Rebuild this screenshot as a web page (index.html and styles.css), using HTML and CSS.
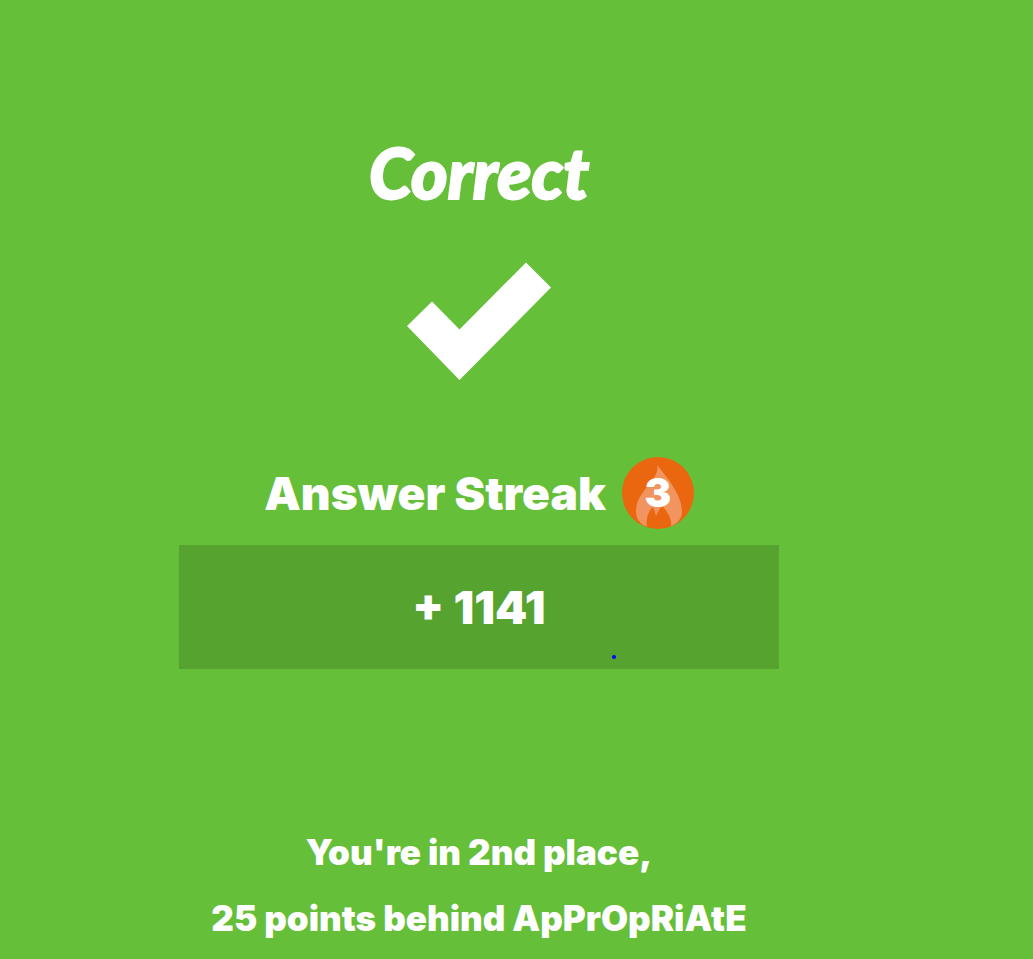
FILE: index.html
```html
<!DOCTYPE html>
<html lang="en">
<head>
<meta charset="utf-8">
<meta name="viewport" content="width=device-width, initial-scale=1">
<title>Correct</title>
<link rel="stylesheet" href="styles.css">
</head>
<body>
<main class="result">
  <h1 class="title">Correct</h1>
  <svg class="check" viewBox="0 0 144 118" aria-hidden="true">
    <path d="M0 64 25 39.500 52.500 67.500 119 0.500 144 25.500 52.500 118Z"/>
  </svg>
  <div class="streak">
    <span class="streak-label">Answer Streak</span>
    <span class="badge">
      <svg class="flame" viewBox="0 0 72 72" aria-hidden="true">
        <circle class="disc" cx="36" cy="36" r="36"/>
        <path class="fire" d="M35.500 8C44 20 60 37 60 55C60 61 56 66 49 69.500C50 63 47 57 42 51C39 47 38 52 34 59C32 52 31 48 29 52C25 58 24 63 25 69.500C18 67 14 62 14 54C14 42 22 34 29 25C34 19 36 14 35.500 8Z"/>
      </svg>
      <span class="count">3</span>
    </span>
  </div>
  <div class="points">
    <span>+ 1141</span>
    <i class="dot"></i>
  </div>
  <p class="rank">You're in 2nd place,</p>
  <p class="rank">25 points behind ApPrOpRiAtE</p>
</main>
</body>
</html>
```
FILE: styles.css
```css
* {
  box-sizing: border-box;
}

body {
  margin: 0;
  background: #66bf39;
  color: #fff;
  font-family: Inter, "Open Sans", sans-serif;
  font-weight: 900;
}

.result {
  display: flex;
  flex-direction: column;
  align-items: center;
  padding: 130px 75px 8px 0;
}

.title {
  margin: 0;
  font-family: Lato, sans-serif;
  font-size: 70px;
  font-style: italic;
  font-weight: 900;
  line-height: 84px;
  -webkit-text-stroke: 2px #fff;
  stroke-linejoin: round;
}

.check {
  width: 144px;
  height: 118px;
  margin-top: 48px;
  fill: #fff;
}

.streak {
  display: flex;
  align-items: center;
  gap: 16px;
  margin-top: 77px;
}

.streak-label {
  font-size: 46px;
  line-height: 72px;
}

.badge {
  display: grid;
  place-items: center;
  width: 72px;
  height: 72px;
}

.flame,
.count {
  grid-area: 1 / 1;
}

.flame {
  width: 72px;
  height: 72px;
}

.disc {
  fill: #eb670f;
}

.fire {
  fill: #f19460;
}

.count {
  z-index: 1;
  font-size: 40px;
  line-height: 72px;
}

.points {
  position: relative;
  width: 100%;
  max-width: 600px;
  margin: 16px 0 150px;
  background: #57a330;
  font-size: 46px;
  line-height: 124px;
  text-align: center;
}

.dot {
  position: absolute;
  right: 163px;
  bottom: 10px;
  width: 4px;
  height: 4px;
  border-radius: 50%;
  background: #00f;
}

.rank {
  margin: 0;
  font-size: 35px;
  line-height: 66px;
  text-align: center;
}
```
